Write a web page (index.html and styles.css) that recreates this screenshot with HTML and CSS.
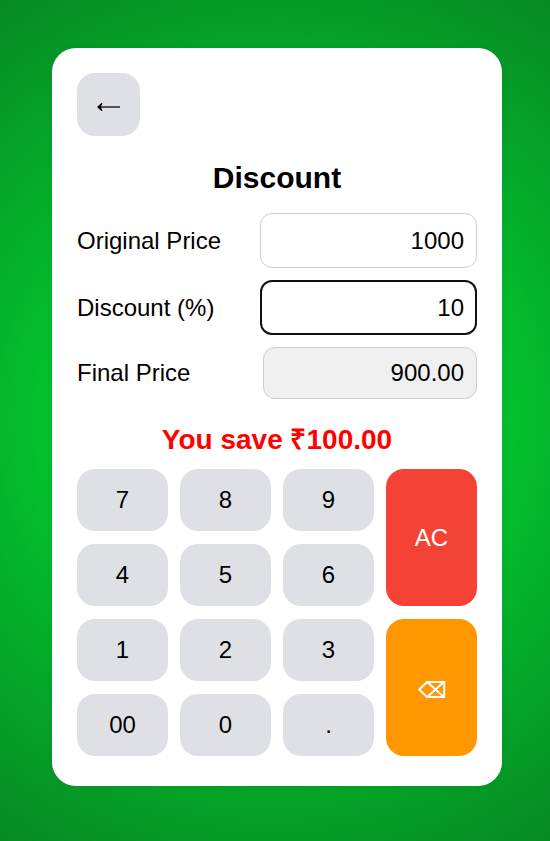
FILE: index.html
```html
<!DOCTYPE html>
<html lang="en">
<head>
<meta charset="utf-8">
<meta name="viewport" content="width=device-width, initial-scale=1">
<title>Discount</title>
<link rel="stylesheet" href="styles.css">
</head>
<body>
<main class="card">
  <button class="key back" type="button" aria-label="Back">
    <svg width="23" height="9" viewBox="0 0 23 9" aria-hidden="true">
      <path fill="#555" d="M4 4H23V6H4Z"/>
      <path fill="#000" d="M0 5 4.500 1H5.500L4.300 4V6L5.500 9H4.500Z"/>
    </svg>
  </button>
  <h1 class="title">Discount</h1>
  <form class="fields">
    <div class="row">
      <label for="price">Original Price</label>
      <input class="field" id="price" type="text" inputmode="decimal" value="1000">
    </div>
    <div class="row">
      <label for="discount">Discount (%)</label>
      <input class="field field-active" id="discount" type="text" inputmode="decimal" value="10">
    </div>
    <div class="row">
      <label for="final">Final Price</label>
      <output class="field field-result" id="final" for="price discount">900.00</output>
    </div>
  </form>
  <p class="saving">You save ₹100.00</p>
  <div class="keypad">
    <button class="key" type="button">7</button>
    <button class="key" type="button">8</button>
    <button class="key" type="button">9</button>
    <button class="key key-tall key-clear" type="button">AC</button>
    <button class="key" type="button">4</button>
    <button class="key" type="button">5</button>
    <button class="key" type="button">6</button>
    <button class="key" type="button">1</button>
    <button class="key" type="button">2</button>
    <button class="key" type="button">3</button>
    <button class="key key-tall key-delete" type="button" aria-label="Backspace">
      <svg class="delete-icon" viewBox="0 0 28 20" width="28" height="20" aria-hidden="true">
        <path d="M1.200 11.500 9 4H26.200V19H9ZM9.500 4.300 25.500 18.700M9.500 18.700 25.500 4.300"/>
      </svg>
    </button>
    <button class="key" type="button">00</button>
    <button class="key" type="button">0</button>
    <button class="key" type="button">.</button>
  </div>
</main>
</body>
</html>
```
FILE: styles.css
```css
* {
  box-sizing: border-box;
}

body {
  margin: 0;
  min-height: 100vh;
  padding: 48px 48px 48px 52px;
  background: radial-gradient(circle, #00ee35, #078924);
  color: #000;
  font-family: "Liberation Sans", Arial, sans-serif;
  font-size: 24px;
}

.card {
  max-width: 450px;
  margin: 0 auto;
  padding: 25px 25px 30px;
  border-radius: 24px;
  background: #fff;
  box-shadow: 0 0 10px rgba(0, 0, 0, 0.06);
}

.key {
  display: flex;
  align-items: center;
  justify-content: center;
  min-height: 62px;
  padding: 0;
  border: 0;
  border-radius: 18px;
  background: #dfe0e6;
  color: #000;
  font: inherit;
}

.back {
  width: 63px;
  height: 63px;
  padding-top: 4px;
}

.title {
  margin: 24px 0 18px;
  font-size: 30px;
  line-height: 35px;
  text-align: center;
}

.fields {
  display: grid;
  gap: 12px;
}

.row {
  display: flex;
  align-items: center;
  justify-content: space-between;
}

.field {
  width: 217px;
  height: 55px;
  padding: 0 12px;
  border: 1px solid #ccc;
  border-radius: 12px;
  outline: 0;
  background: #fff;
  color: #000;
  font: inherit;
  text-align: right;
}

.field-active {
  padding: 0 11px;
  border: 2px solid #101010;
}

.field-result {
  width: 214px;
  height: 52px;
  background: #f0f0f0;
  line-height: 50px;
}

.saving {
  margin: 25px 0 13px;
  color: #f00;
  font-size: 28px;
  font-weight: bold;
  line-height: 32px;
  text-align: center;
}

.keypad {
  display: grid;
  grid-template-columns: repeat(4, 1fr);
  gap: 13px 12px;
}

.key-tall {
  grid-row: span 2;
  color: #fff;
}

.key-clear {
  background: #f44336;
}

.key-delete {
  background: #ff9800;
}

.delete-icon {
  fill: none;
  stroke: #fff;
  stroke-width: 2;
}
```
